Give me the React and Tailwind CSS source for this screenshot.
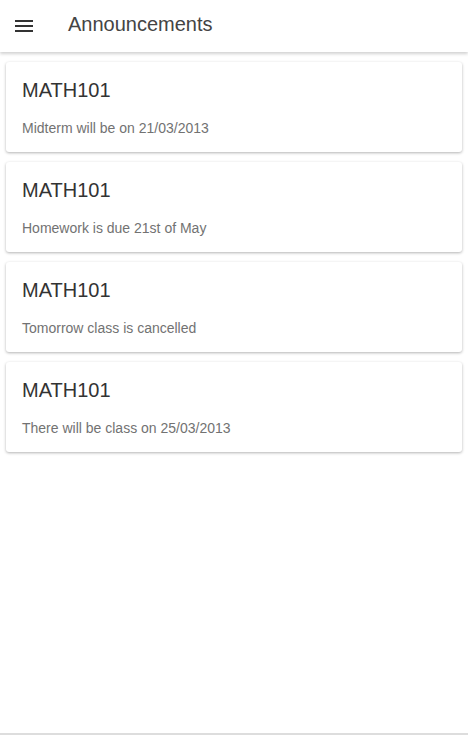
// App.jsx
const announcements = [
    { course: 'MATH101', text: 'Midterm will be on 21/03/2013' },
    { course: 'MATH101', text: 'Homework is due 21st of May' },
    { course: 'MATH101', text: 'Tomorrow class is cancelled' },
    { course: 'MATH101', text: 'There will be class on 25/03/2013' },
];

const MenuIcon = () => (
    <svg width="24" height="24" viewBox="0 0 24 24" fill="#333">
        <path d="M3 18h18v-2H3v2zm0-5h18v-2H3v2zm0-7v2h18V6H3z" />
    </svg>
);

export default function App() {
    return (
        <div
            className="h-[735px] w-full bg-white flex flex-col"
            style={{ fontFamily: '"Liberation Sans", Arial, sans-serif' }}
        >
            <header className="h-[52px] flex items-center bg-white shadow-[0_2px_3px_rgba(0,0,0,0.18)] relative z-10 shrink-0">
                <button type="button" className="ml-3 mt-[-1px]">
                    <MenuIcon />
                </button>
                <h1 className="ml-8 mt-[-4px] text-[20px] text-[#444] leading-none">Announcements</h1>
            </header>

            <main className="flex-1 flex flex-col gap-[10px] px-[6px] pt-[10px]">
                {announcements.map((a, i) => (
                    <div
                        key={i}
                        className="bg-white rounded-[3px] shadow-[0_1px_3px_rgba(0,0,0,0.3)] px-4 pt-4 pb-[14px]"
                    >
                        <h2 className="text-[20px] leading-6 text-[#333]">{a.course}</h2>
                        <p className="mt-4 text-[14px] leading-5 text-[#727272]">{a.text}</p>
                    </div>
                ))}
            </main>

            <div className="h-[2px] bg-[#ddd] shrink-0" />
        </div>
    );
}
